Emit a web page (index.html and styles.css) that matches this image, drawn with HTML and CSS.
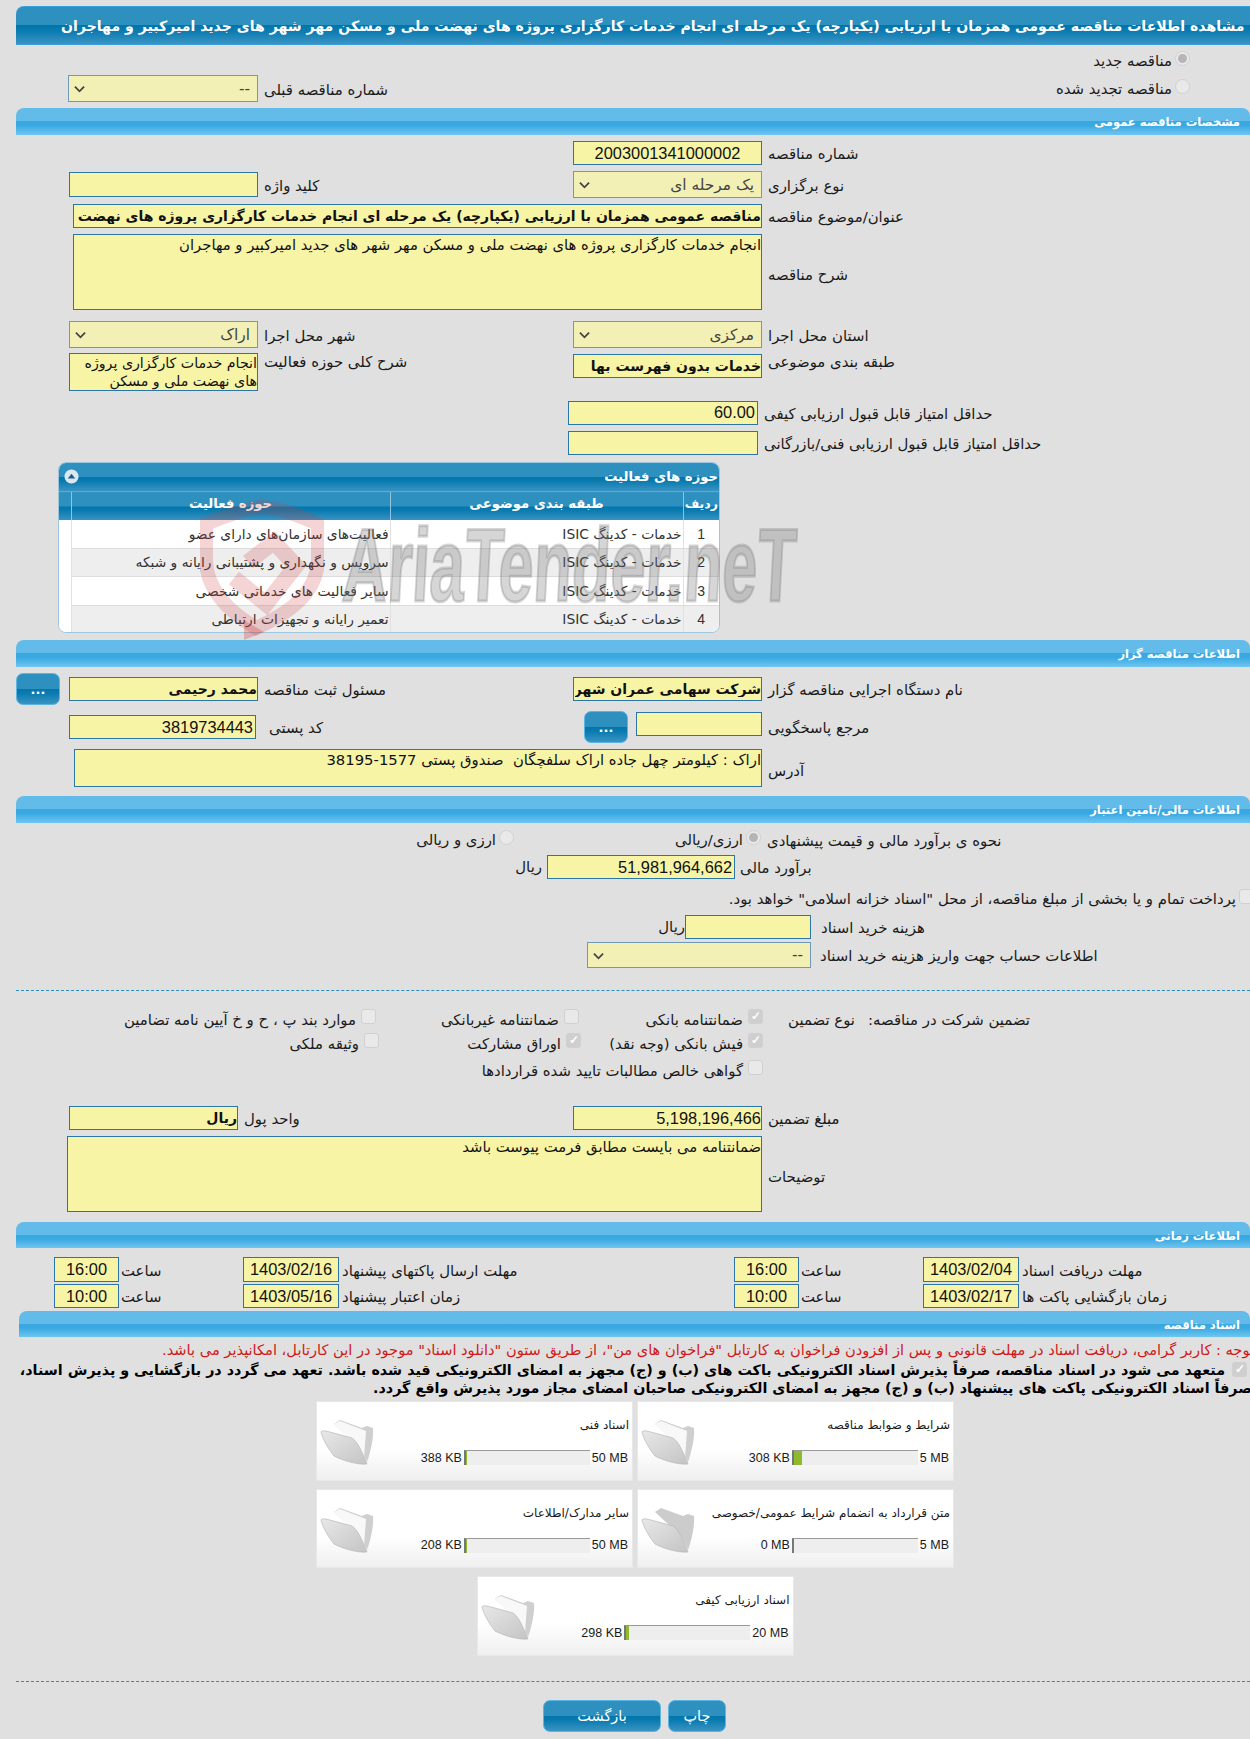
FILE: index.html
```html
<!DOCTYPE html>
<html lang="fa">
<head>
<meta charset="utf-8">
<title>مشاهده اطلاعات مناقصه</title>
<link rel="stylesheet" href="styles.css">
</head>
<body>
<div class="page">
  <h1 class="title-bar"><span dir="rtl">مشاهده اطلاعات مناقصه عمومی همزمان با ارزیابی (یکپارچه) یک مرحله ای انجام خدمات کارگزاری پروژه های نهضت ملی و مسکن مهر شهر های جدید امیرکبیر و مهاجران</span></h1>

  <div class="radio-head">
    <label class="pair" dir="rtl"><input type="radio" name="t" checked disabled><span>مناقصه جدید</span></label>
  </div>
  <div class="row row-prev">
    <div class="sel w190"><select disabled dir="rtl"><option>--</option></select><svg viewBox="0 0 12 8"><path d="M1 1.5 6 6.5 11 1.5"/></svg></div>
    <label class="lab" dir="rtl">شماره مناقصه قبلی</label>
    <span></span>
    <label class="pair pair-head" dir="rtl"><input type="radio" name="t" disabled><span>مناقصه تجدید شده</span></label>
  </div>

  <h2 class="sec sec-1" dir="rtl">مشخصات مناقصه عمومی</h2>
  <div class="rows">
    <div class="row h24">
      <span></span><span></span>
      <input class="in num center" value="2003001341000002" readonly>
      <label class="lab" dir="rtl">شماره مناقصه</label>
    </div>
    <div class="row h27">
      <input class="in h25 w189" readonly dir="rtl">
      <label class="lab" dir="rtl">کلید واژه</label>
      <div class="sel w189"><select disabled dir="rtl"><option>یک مرحله ای</option></select><svg viewBox="0 0 12 8"><path d="M1 1.5 6 6.5 11 1.5"/></svg></div>
      <label class="lab" dir="rtl">نوع برگزاری</label>
    </div>
    <div class="row h24">
      <input class="in strong span3 w689" dir="rtl" readonly value="مناقصه عمومی همزمان با ارزیابی (یکپارچه) یک مرحله ای انجام خدمات کارگزاری پروژه های نهضت ملی و مسکن مهر شهر های جدید امیرکبیر و مهاجران">
      <label class="lab" dir="rtl">عنوان/موضوع مناقصه</label>
    </div>
    <div class="row">
      <textarea class="ta span3 w689 h76" dir="rtl" readonly>انجام خدمات کارگزاری پروژه های نهضت ملی و مسکن مهر شهر های جدید امیرکبیر و مهاجران</textarea>
      <label class="lab" dir="rtl">شرح مناقصه</label>
    </div>
    <div class="row h26 mt5">
      <div class="sel w189"><select disabled dir="rtl"><option>اراک</option></select><svg viewBox="0 0 12 8"><path d="M1 1.5 6 6.5 11 1.5"/></svg></div>
      <label class="lab" dir="rtl">شهر محل اجرا</label>
      <div class="sel w189"><select disabled dir="rtl"><option>مرکزی</option></select><svg viewBox="0 0 12 8"><path d="M1 1.5 6 6.5 11 1.5"/></svg></div>
      <label class="lab" dir="rtl">استان محل اجرا</label>
    </div>
    <div class="row row-top">
      <textarea class="ta ta-act w189 h38" dir="rtl" readonly>انجام خدمات کارگزاری پروژه های نهضت ملی و مسکن</textarea>
      <label class="lab lab-top" dir="rtl">شرح کلی حوزه فعالیت</label>
      <input class="in strong in-cat" dir="rtl" readonly value="خدمات بدون فهرست بها">
      <label class="lab lab-top" dir="rtl">طبقه بندی موضوعی</label>
    </div>
    <div class="row row-score h25 mt3">
      <span></span>
      <input class="in num w190" dir="ltr" readonly value="60.00">
      <label class="lab" dir="rtl">حداقل امتیاز قابل قبول ارزیابی کیفی</label>
    </div>
    <div class="row row-score h25 mtm1">
      <span></span>
      <input class="in num w190" readonly>
      <label class="lab" dir="rtl">حداقل امتیاز قابل قبول ارزیابی فنی/بازرگانی</label>
    </div>
  </div>

  <section class="panel">
    <div class="panel-head" dir="rtl">
      <span>حوزه های فعالیت</span>
      <svg class="toggle" viewBox="0 0 16 16"><circle cx="8" cy="8" r="7.5"/><path d="M8 5 12 10H4Z"/></svg>
    </div>
    <table class="grid">
      <thead>
        <tr><th class="c-e"></th><th class="c-a">حوزه فعالیت</th><th class="c-c">طبقه بندی موضوعی</th><th class="c-r">ردیف</th></tr>
      </thead>
      <tbody>
        <tr><td class="c-e"></td><td dir="rtl">فعالیت‌های سازمان‌های دارای عضو</td><td dir="rtl">خدمات - کدینگ ISIC</td><td class="c-n">1</td></tr>
        <tr><td class="c-e"></td><td dir="rtl">سرویس و نگهداری و پشتیبانی رایانه و شبکه</td><td dir="rtl">خدمات - کدینگ ISIC</td><td class="c-n">2</td></tr>
        <tr><td class="c-e"></td><td dir="rtl">سایر فعالیت های خدماتی شخصی</td><td dir="rtl">خدمات - کدینگ ISIC</td><td class="c-n">3</td></tr>
        <tr><td class="c-e"></td><td dir="rtl">تعمیر رایانه و تجهیزات ارتباطی</td><td dir="rtl">خدمات - کدینگ ISIC</td><td class="c-n">4</td></tr>
      </tbody>
    </table>
  </section>

  <h2 class="sec sec-2" dir="rtl">اطلاعات مناقصه گزار</h2>
  <div class="rows">
    <div class="row h32">
      <div class="ctl-between">
        <button class="btn btn-dots" type="button">...</button>
        <input class="in strong w189" dir="rtl" readonly value="محمد رحیمی">
      </div>
      <label class="lab" dir="rtl">مسئول ثبت مناقصه</label>
      <input class="in strong w189" dir="rtl" readonly value="شرکت سهامی عمران شهر جدید امیرکبیر">
      <label class="lab" dir="rtl">نام دستگاه اجرایی مناقصه گزار</label>
    </div>
    <div class="row h32">
      <input class="in num w187 shift-l" readonly value="3819734443" dir="rtl">
      <label class="lab lab-post" dir="rtl">کد پستی</label>
      <div class="ctl-ref">
        <button class="btn btn-dots" type="button">...</button>
        <input class="in w126 shift-up" readonly>
      </div>
      <label class="lab" dir="rtl">مرجع پاسخگویی</label>
    </div>
    <div class="row">
      <textarea class="ta span3 w688 h38" dir="rtl" readonly>اراک : کیلومتر چهل جاده اراک سلفچگان  صندوق پستی 1577-38195</textarea>
      <label class="lab" dir="rtl">آدرس</label>
    </div>
  </div>

  <h2 class="sec sec-3" dir="rtl">اطلاعات مالی/تامین اعتبار</h2>
  <div class="fin-radio">
    <label class="pair" dir="rtl"><input type="radio" name="f" disabled><span>ارزی و ریالی</span></label>
    <label class="pair" dir="rtl"><input type="radio" name="f" checked disabled><span>ارزی/ریالی</span></label>
    <label class="lab" dir="rtl">نحوه ی برآورد مالی و قیمت پیشنهادی</label>
  </div>
  <div class="fin-budget">
    <div class="ctl-end"><span class="unit" dir="rtl">ریال</span><input class="in num w188" dir="ltr" readonly value="51,981,964,662"></div>
    <label class="lab" dir="rtl">برآورد مالی</label>
  </div>
  <div class="fin-check">
    <label class="pair" dir="rtl"><input type="checkbox" disabled><span>پرداخت تمام و یا بخشی از مبلغ مناقصه، از محل "اسناد خزانه اسلامی" خواهد بود.</span></label>
  </div>
  <div class="fin-cost">
    <div class="ctl-end"><span class="unit unit-tight" dir="rtl">ریال</span><input class="in w126" readonly></div>
    <label class="lab" dir="rtl">هزینه خرید اسناد</label>
  </div>
  <div class="fin-account">
    <div class="sel w224"><select disabled dir="rtl"><option>--</option></select><svg viewBox="0 0 12 8"><path d="M1 1.5 6 6.5 11 1.5"/></svg></div>
    <label class="lab" dir="rtl">اطلاعات حساب جهت واریز هزینه خرید اسناد</label>
  </div>

  <hr class="dash dash-1">

  <div class="guar">
    <label class="pair" dir="rtl"><input type="checkbox" disabled><span>موارد بند پ ، ح و خ آیین نامه تضامین</span></label>
    <label class="pair" dir="rtl"><input type="checkbox" disabled><span>ضمانتنامه غیربانکی</span></label>
    <label class="pair" dir="rtl"><input type="checkbox" checked disabled><span>ضمانتنامه بانکی</span></label>
    <span class="guar-t" dir="rtl">نوع تضمین</span>
    <span class="guar-t" dir="rtl">تضمین شرکت در مناقصه:</span>

    <label class="pair nudge3" dir="rtl"><input type="checkbox" disabled><span>وثیقه ملکی</span></label>
    <label class="pair nudge2" dir="rtl"><input type="checkbox" checked disabled><span>اوراق مشارکت</span></label>
    <label class="pair" dir="rtl"><input type="checkbox" checked disabled><span>فیش بانکی (وجه نقد)</span></label>
    <span></span><span></span>

    <span></span><span></span>
    <label class="pair guar-wide" dir="rtl"><input type="checkbox" disabled><span>گواهی خالص مطالبات تایید شده قراردادها</span></label>
  </div>

  <div class="rows rows-guar">
    <div class="row row-unit h24">
      <input class="in strong w169" dir="rtl" readonly value="ریال">
      <label class="lab" dir="rtl">واحد پول</label>
      <input class="in num w189 tight" dir="ltr" readonly value="5,198,196,466">
      <label class="lab" dir="rtl">مبلغ تضمین</label>
    </div>
    <div class="row">
      <textarea class="ta span3 w695 h76" dir="rtl" readonly>ضمانتنامه می بایست مطابق فرمت پیوست باشد</textarea>
      <label class="lab" dir="rtl">توضیحات</label>
    </div>
  </div>

  <h2 class="sec sec-4" dir="rtl">اطلاعات زمانی</h2>
  <div class="dates">
    <input class="in num center w65" readonly value="16:00"><label class="lab lab-t" dir="rtl">ساعت</label>
    <input class="in num center w96" readonly value="1403/02/16"><label class="lab lab-d" dir="rtl">مهلت ارسال پاکتهای پیشنهاد</label>
    <input class="in num center w65" readonly value="16:00"><label class="lab lab-t" dir="rtl">ساعت</label>
    <input class="in num center w96" readonly value="1403/02/04"><label class="lab lab-d" dir="rtl">مهلت دریافت اسناد</label>

    <input class="in num center w65" readonly value="10:00"><label class="lab lab-t" dir="rtl">ساعت</label>
    <input class="in num center w96" readonly value="1403/05/16"><label class="lab lab-d" dir="rtl">زمان اعتبار پیشنهاد</label>
    <input class="in num center w65" readonly value="10:00"><label class="lab lab-t" dir="rtl">ساعت</label>
    <input class="in num center w96" readonly value="1403/02/17"><label class="lab lab-d" dir="rtl">زمان بازگشایی پاکت ها</label>
  </div>

  <h2 class="sec sec-5" dir="rtl">اسناد مناقصه</h2>
  <p class="note-red" dir="rtl">توجه : کاربر گرامی، دریافت اسناد در مهلت قانونی و پس از افزودن فراخوان به کارتابل "فراخوان های من"، از طریق ستون "دانلود اسناد" موجود در این کارتابل، امکانپذیر می باشد.</p>
  <label class="note-b note-b1" dir="rtl"><input type="checkbox" checked disabled><span>متعهد می شود در اسناد مناقصه، صرفاً پذیرش اسناد الکترونیکی باکت های (ب) و (ج) مجهز به امضای الکترونیکی قید شده باشد. تعهد می گردد در بازگشایی و پذیرش اسناد،</span></label>
  <p class="note-b note-b2" dir="rtl">صرفاً اسناد الکترونیکی پاکت های پیشنهاد (ب) و (ج) مجهز به امضای الکترونیکی صاحبان امضای مجاز مورد پذیرش واقع گردد.</p>

  <div class="cards">
    <article class="card">
      <svg class="folder" viewBox="0 0 54 48"><use href="#folder"/></svg>
      <div class="card-body" dir="rtl">
        <div class="card-title">اسناد فنی</div>
        <div class="meter"><span class="m-max">50 MB</span><span class="m-track"><i style="width:1px"></i></span><span class="m-val">388 KB</span></div>
      </div>
    </article>
    <article class="card">
      <svg class="folder" viewBox="0 0 54 48"><use href="#folder"/></svg>
      <div class="card-body" dir="rtl">
        <div class="card-title">شرایط و ضوابط مناقصه</div>
        <div class="meter"><span class="m-max">5 MB</span><span class="m-track"><i style="width:8px"></i></span><span class="m-val">308 KB</span></div>
      </div>
    </article>
    <article class="card">
      <svg class="folder" viewBox="0 0 54 48"><use href="#folder"/></svg>
      <div class="card-body" dir="rtl">
        <div class="card-title">سایر مدارک/اطلاعات</div>
        <div class="meter"><span class="m-max">50 MB</span><span class="m-track"><i style="width:1px"></i></span><span class="m-val">208 KB</span></div>
      </div>
    </article>
    <article class="card">
      <svg class="folder" viewBox="0 0 54 48"><use href="#folder-empty"/></svg>
      <div class="card-body" dir="rtl">
        <div class="card-title">متن قرارداد به انضمام شرایط عمومی/خصوصی</div>
        <div class="meter"><span class="m-max">5 MB</span><span class="m-track"></span><span class="m-val">0 MB</span></div>
      </div>
    </article>
    <article class="card">
      <svg class="folder" viewBox="0 0 54 48"><use href="#folder"/></svg>
      <div class="card-body" dir="rtl">
        <div class="card-title">اسناد ارزیابی کیفی</div>
        <div class="meter"><span class="m-max">20 MB</span><span class="m-track"><i style="width:3px"></i></span><span class="m-val">298 KB</span></div>
      </div>
    </article>
  </div>

  <hr class="dash dash-2">

  <div class="actions">
    <button class="btn btn-back" type="button">بازگشت</button>
    <button class="btn btn-print" type="button">چاپ</button>
  </div>
</div>

<div class="watermark" aria-hidden="true">
  <svg class="wm-shield" viewBox="0 0 124 140">
    <path class="wm-line" d="M6 24C30 14 48 8 62 7 78 8 96 14 118 24V62C116 92 92 112 56 128 30 112 8 92 6 62Z"/>
    <path class="wm-line thin" d="M48 62 74 42 96 66 66 104 34 78"/>
    <path class="wm-fill" d="M44 120 64 132 44 140Z"/>
  </svg>
  <span class="wm-text">AriaTender.neT</span>
</div>

<svg class="defs" width="0" height="0" aria-hidden="true">
  <defs>
    <linearGradient id="fg" x1="0" y1="0" x2="1" y2="1"><stop offset="0" stop-color="#e8e8e8"/><stop offset="1" stop-color="#c4c4c4"/></linearGradient>
    <symbol id="folder" viewBox="0 0 54 48">
      <path d="M14 6 20 2 42 10 47 8 53 10C54 20 50 36 47 44L40 30Z" fill="#cfcfcf"/>
      <path d="M14 6 20 3 46 13 44 40 32 24Z" fill="#f8f8f8"/>
      <path d="M1 14C2 12 6 13 10 14L32 20C38 24 42 34 47 46 36 47 22 42 14 38 8 30 3 22 1 14Z" fill="url(#fg)" stroke="#b8b8b8" stroke-width=".7"/>
    </symbol>
    <symbol id="folder-empty" viewBox="0 0 54 48">
      <path d="M14 6 20 2 42 10 47 8 53 10C54 20 50 36 47 44L40 30Z" fill="#cccccc"/>
      <path d="M1 14C2 12 6 13 10 14L32 20C38 24 42 34 47 46 36 47 22 42 14 38 8 30 3 22 1 14Z" fill="url(#fg)" stroke="#b8b8b8" stroke-width=".7"/>
    </symbol>
  </defs>
</svg>
</body>
</html>
```
FILE: styles.css
```css
* { box-sizing: border-box; }
html, body { margin: 0; padding: 0; }
body {
  position: relative;
  width: 1250px;
  height: 1739px;
  overflow: hidden;
  background: #e0e0e0;
  color: #1a1a1a;
  font-family: "DejaVu Sans", sans-serif;
  font-size: 14.9px;
}
.page { width: 1234px; margin-left: 16px; padding-top: 6px; }

/* bars */
.title-bar {
  display: flex;
  align-items: center;
  height: 39px;
  margin: 0;
  padding-left: 45px;
  overflow: hidden;
  white-space: nowrap;
  color: #fff;
  font-size: 14.1px;
  font-weight: bold;
  border-radius: 8px 0 0 0;
  border-top: 1px solid #3a9edb;
  border-bottom: 1px solid #3a9edb;
  background: linear-gradient(#2e90be 0, #2e90be 50%, #0076ad 50%, #0b7bb0 65%, #3a94c3 100%);
}
.sec {
  height: 27px;
  margin: 0;
  padding: 1px 10px 0 0;
  line-height: 26px;
  color: #fff;
  font-size: 11.5px;
  font-weight: bold;
  border-radius: 8px 8px 0 0;
  background: linear-gradient(#63bbea 0, #63bbea 48%, #39a8e1 50%, #3aa9e2 65%, #6ec5f0 100%);
}
.sec-1 { margin-top: 6px; }
.sec-2 { margin-top: 7px; }
.sec-3 { margin-top: 9px; }
.sec-4 { margin-top: 10px; height: 26px; }
.sec-5 { margin: 3px 0 0 3px; height: 26px; }

/* form rows */
.rows { display: flex; flex-direction: column; gap: 6px; padding-top: 6px; }
.rows-guar { padding-top: 22px; }
.row {
  display: grid;
  grid-template-columns: 242px 315px 189px 1fr;
  align-items: center;
}
.row > :first-child, .row > :nth-child(3) { justify-self: end; }
.row > .span3 { grid-column: 1 / 4; justify-self: end; }
.row-top { align-items: start; }
.row-score { grid-template-columns: 552px 190px 1fr; }
.row-score > :nth-child(2) { justify-self: end; }
.row > .lab { justify-self: start; }
.row-unit { grid-template-columns: 222px 335px 189px 1fr; }
.row-prev { height: 27px; }
.h24 { height: 24px; } .h25 { height: 25px; } .h26 { height: 26px; } .h27 { height: 27px; } .h32 { height: 32px; }
.mt3 { margin-top: 3px; } .mt5 { margin-top: 5px; } .mtm1 { margin-top: -1px; }

.lab { display: block; padding-top: 2px; padding-left: 6px; text-align: left; white-space: nowrap; }
.row > textarea.span3 + .lab { padding-top: 6px; }
.lab-top { padding-top: 0; }
.lab-post { padding-left: 11px; }

.in, .ta, .sel select {
  font-family: "DejaVu Sans", sans-serif;
  color: #111;
  background: #f7f4a6;
  border: 1px solid #2b75a8;
  border-radius: 0;
  outline: 0;
}
.in { display: block; width: 189px; height: 24px; padding: 0 0 0 1px; font-size: 15px; }
.strong { font-weight: bold; font-size: 14px; }
.num { font-family: "Liberation Sans", sans-serif; font-size: 16.4px; text-align: right; padding-right: 2px; }
.center { text-align: center; padding: 0; }
.tight { padding-right: 0; }
.ta { display: block; padding: 1px 0 1px 1px; font-size: 14.8px; line-height: 17px; resize: none; overflow: hidden; }
.ta-act { padding: 0; font-size: 14.2px; line-height: 18px; }
.in-cat { height: 24px; margin-top: 1px; }
.shift-l { margin-right: 2px; }
.shift-up { margin-top: -7px; }

.w65 { width: 65px; } .w96 { width: 96px; } .w126 { width: 126px; } .w169 { width: 169px; }
.w187 { width: 187px; } .w188 { width: 188px; } .w189 { width: 189px; } .w190 { width: 190px; }
.w224 { width: 224px; } .w688 { width: 688px; } .w689 { width: 689px; } .w695 { width: 695px; }
.h25.in, .in.h25 { height: 25px; }
.h38 { height: 38px; } .h76 { height: 76px; }

.sel { position: relative; display: block; height: 27px; }
.sel select {
  appearance: none;
  -webkit-appearance: none;
  display: block;
  width: 100%;
  height: 100%;
  padding: 0 7px 0 0;
  font-size: 15.4px;
  color: #444;
  opacity: 1;
  background: #f3f0b6;
  border-color: #6f9ab5;
}
.sel svg {
  position: absolute;
  left: 6px;
  top: 10px;
  width: 11px;
  height: 8px;
  fill: none;
  stroke: #444;
  stroke-width: 2;
}

/* radios & checks */
input[type=radio], input[type=checkbox] {
  appearance: none;
  -webkit-appearance: none;
  position: relative;
  flex: none;
  width: 15px;
  height: 15px;
  margin: 0;
  background: #e9e9e9;
  border: 1px solid #d0d0d0;
}
input[type=radio] { border-radius: 50%; }
input[type=radio]:checked::after {
  content: "";
  position: absolute;
  inset: 2px;
  border-radius: 50%;
  background: #b5b5b5;
}
input[type=checkbox] { border-radius: 3px; }
input[type=checkbox]:checked { background: #cfcfcf; }
input[type=checkbox]:checked::after {
  content: "✓";
  position: absolute;
  inset: 0;
  color: #fff;
  font-size: 12px;
  font-weight: bold;
  line-height: 13px;
  text-align: center;
}
.pair { display: flex; align-items: flex-start; gap: 3px; white-space: nowrap; }
.pair > span { padding-top: 1px; }
.radio-head { display: flex; justify-content: flex-end; height: 30px; padding-top: 6px; padding-right: 60px; }
.row > .pair-head { justify-self: end; padding-right: 60px; margin-top: -1px; }

/* panel */
.panel {
  width: 662px;
  height: 171px;
  margin: 7px 0 0 42px;
  overflow: hidden;
  background: #fff;
  border: 1px solid #9cc6de;
  border-radius: 8px;
}
.panel-head {
  display: flex;
  align-items: center;
  justify-content: space-between;
  height: 28px;
  padding: 0 1px 2px 5px;
  color: #fff;
  font-size: 13.2px;
  font-weight: bold;
  background: linear-gradient(#2e90be 0, #2e90be 50%, #0076ad 50%, #0b7bb0 65%, #3a94c3 100%);
}
.toggle { width: 15px; height: 15px; }
.toggle circle { fill: #dbe8f3; }
.toggle path { fill: #1c5f8c; }
.grid { width: 100%; border-collapse: collapse; table-layout: fixed; }
.grid th {
  height: 28px;
  padding: 0 0 4px;
  color: #fff;
  font-size: 13.2px;
  font-weight: bold;
  border-left: 1px solid #8cc4e2;
  border-top: 1px solid #5cacd8;
  background: linear-gradient(#2e90be 0, #2e90be 50%, #0076ad 50%, #0b7bb0 65%, #3a94c3 100%);
}
.grid th.c-e { width: 12px; border-left: 0; }
.grid th.c-a { width: 319px; }
.grid th.c-c { width: 293px; }
.grid th.c-r { font-size: 12.5px; }
.grid td {
  height: 28.5px;
  padding: 0 1px;
  font-size: 13.8px;
  color: #333;
  border-left: 1px solid #e2e2e2;
  border-bottom: 1px solid #dcdcdc;
}
.grid tbody tr:nth-child(even) td { background: #eee; }
.grid td.c-e, .grid tbody tr:nth-child(even) td.c-e { background: #fff; border-left: 0; border-bottom: 0; }
.grid td.c-n { text-align: center; font-family: "Liberation Sans", sans-serif; font-size: 14px; }

/* buttons */
.btn {
  display: block;
  color: #fff;
  font-family: "DejaVu Sans", sans-serif;
  border: 1px solid #5cb4e2;
  border-radius: 7px;
  background: linear-gradient(#2e90be 0, #2e90be 50%, #0076ad 50%, #0b7bb0 65%, #3a94c3 100%);
}
.btn-dots { width: 44px; height: 32px; padding: 0; font-size: 13px; font-weight: bold; }
.ctl-between { display: flex; align-items: center; justify-content: space-between; width: 242px; }
.ctl-ref { display: flex; align-items: center; gap: 8px; justify-content: flex-end; justify-self: end; }

/* finance */
.fin-radio { display: grid; grid-template-columns: 498px 247px 1fr; align-items: center; height: 31px; padding-top: 2px; }
.fin-radio .pair { justify-self: end; }
.fin-budget { display: grid; grid-template-columns: 719px 1fr; align-items: center; height: 24px; margin-top: 1px; }
.fin-budget .lab { padding-left: 5px; }
.ctl-end { display: flex; align-items: center; justify-content: flex-end; gap: 5px; }
.unit-tight { margin-right: -5px; }
.fin-check { display: flex; justify-content: flex-end; height: 21px; margin-top: 10px; margin-right: -4px; }
.fin-cost { display: grid; grid-template-columns: 795px 1fr; align-items: center; height: 24px; margin-top: 5px; }
.fin-cost .lab { padding-left: 10px; }
.fin-account { display: grid; grid-template-columns: 795px 1fr; align-items: center; height: 26px; margin-top: 3px; }
.fin-account .sel { justify-self: end; width: 224px; height: 26px; }
.fin-account .lab { padding-left: 9px; }

.dash { height: 0; margin: 0; border: 0; border-top: 1px dashed #2b8dc0; }
.dash-1 { margin-top: 22px; }
.dash-2 { margin-top: 25px; }

/* guarantee */
.guar {
  display: grid;
  grid-template-columns: 360px 203px 184px 92px 175px;
  grid-template-rows: 24px 27px 24px;
  margin-top: 18px;
  justify-items: end;
  align-items: start;
}
.guar .pair { gap: 5px; }
.guar .pair > span { padding-top: 2px; }
.guar-t { white-space: nowrap; padding-top: 2px; }
.guar-wide { grid-column: 3; }
.nudge2 { margin-right: -2px; }
.nudge3 { margin-right: -3px; }

/* dates */
.dates {
  display: grid;
  grid-template-columns: 103px 124px 96px 395px 65px 124px 96px 1fr;
  grid-template-rows: 25px 24px;
  row-gap: 2px;
  padding-top: 9px;
  align-items: center;
}
.dates .in { height: 100%; justify-self: end; }
.lab-t { padding-left: 2px; }
.lab-d { padding-left: 3px; }

/* notes */
.note-red {
  margin: 4px -4px 0 0;
  height: 17px;
  color: #d01818;
  font-size: 14.6px;
  white-space: nowrap;
  text-align: right;
  line-height: 17px;
}
.note-b {
  color: #000;
  font-size: 14.3px;
  font-weight: bold;
  white-space: nowrap;
  line-height: 17px;
}
.note-b1 {
  display: flex;
  align-items: flex-start;
  gap: 7px;
  margin: 4px 3px 0 0;
  height: 17px;
}
.note-b2 { margin: 1px -2px 0 0; height: 17px; }

/* cards */
.cards {
  display: flex;
  flex-wrap: wrap;
  justify-content: center;
  gap: 8px 4px;
  width: 638px;
  margin: 4px 0 0 300px;
}
.card {
  display: flex;
  width: 317px;
  height: 79.5px;
  padding: 0 3px;
  background: linear-gradient(#fff 0, #fff 60%, #efefef 100%);
  border: 1px solid #e8e8e8;
}
.folder { flex: none; width: 54px; height: 48px; margin-top: 16px; }
.card-body { flex: 1; display: flex; flex-direction: column; padding-top: 14px; }
.card-title { font-size: 12px; line-height: 18px; white-space: nowrap; }
.meter { display: flex; align-items: center; gap: 2px; margin-top: 16px; padding-right: 1px; font-family: "Liberation Sans", sans-serif; font-size: 12.5px; }
.m-max, .m-val { direction: ltr; unicode-bidi: isolate; white-space: nowrap; }
.m-track {
  display: flex;
  direction: ltr;
  justify-content: flex-start;
  flex: none;
  width: 126px;
  height: 15px;
  background: #eee;
  border-top: 1px solid #9a9a9a;
  border-left: 2px solid #777;
}
.m-track i { display: block; height: 100%; background: #8ebb2d; }

/* actions */
.actions { display: flex; justify-content: center; gap: 7px; margin: 18px 0 0 3px; direction: ltr; }
.btn-back { width: 118px; height: 32px; font-size: 14.5px; }
.btn-print { width: 58px; height: 32px; font-size: 14.5px; }

/* watermark */
.watermark { position: absolute; left: 200px; top: 500px; width: 610px; height: 140px; pointer-events: none; }
.wm-shield { position: absolute; left: 0; top: 0; width: 124px; height: 140px; }
.wm-line { fill: none; stroke: rgba(205, 60, 60, .22); stroke-width: 14; }
.wm-line.thin { stroke-width: 16; }
.wm-fill { fill: rgba(205, 60, 60, .3); }
.wm-text {
  position: absolute;
  left: 146px;
  top: 5px;
  font-family: "Liberation Sans", sans-serif;
  font-size: 104px;
  font-weight: bold;
  line-height: 120px;
  white-space: nowrap;
  color: rgba(120, 120, 120, .3);
  transform: scaleX(.605) skewX(-5deg);
  transform-origin: left top;
  -webkit-text-stroke: 3px rgba(120, 120, 120, .3);
}
.defs { position: absolute; }
```
